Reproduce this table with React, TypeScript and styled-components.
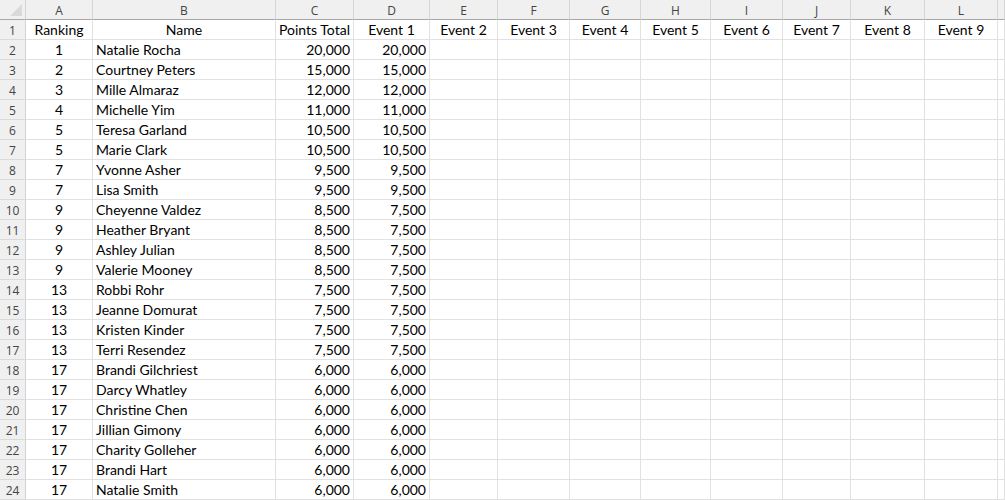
import React from "react";
import styled, { createGlobalStyle } from "styled-components";

const Global = createGlobalStyle`
  html, body { margin: 0; padding: 0; background: #ffffff; }
  body { font-family: "Lato", "Noto Sans", Arial, sans-serif; overflow: hidden; }
`;

const colWidths = [26, 67, 183, 78, 76, 68, 72, 71, 70, 72, 68, 74, 73, 7];
const letters = ["A", "B", "C", "D", "E", "F", "G", "H", "I", "J", "K", "L", ""];

const Sheet = styled.div`
  display: grid;
  grid-template-columns: ${colWidths.map((w) => `${w}px`).join(" ")};
  grid-auto-rows: 20px;
  width: 1005px;
  height: 500px;
  overflow: hidden;
`;

const Corner = styled.div`
  position: relative;
  background: #f0f0f0;
  box-sizing: border-box;
  border-right: 1px solid #d2d2d2;
  border-bottom: 1px solid #a8a8a8;
  &::after {
    content: "";
    position: absolute;
    right: 3px;
    bottom: 3px;
    width: 0;
    height: 0;
    border-left: 12px solid transparent;
    border-bottom: 12px solid #d9d9d9;
  }
`;

const ColHeader = styled.div`
  background: #f0f0f0;
  box-sizing: border-box;
  border-right: 1px solid #d6d6d6;
  border-bottom: 1px solid #a8a8a8;
  color: #444444;
  font-family: "Open Sans", Arial, sans-serif;
  font-size: 12px;
  display: flex;
  align-items: center;
  justify-content: center;
  padding-top: 1px;
`;

const RowHeader = styled.div`
  background: #f0f0f0;
  box-sizing: border-box;
  border-right: 1px solid #d2d2d2;
  border-bottom: 1px solid #dadada;
  color: #444444;
  font-family: "Open Sans", Arial, sans-serif;
  font-size: 12px;
  display: flex;
  align-items: center;
  justify-content: center;
  padding-top: 2px;
`;

const Cell = styled.div<{ $align?: "left" | "center" | "right" }>`
  box-sizing: border-box;
  border-right: 1px solid #e1e1e1;
  border-bottom: 1px solid #e1e1e1;
  color: #000000;
  font-family: "Lato", "Noto Sans", Arial, sans-serif;
  font-size: 14px;
  white-space: nowrap;
  overflow: hidden;
  display: flex;
  align-items: flex-end;
  padding: 0 3px 0 3px;
  line-height: 18px;
  justify-content: ${(p) =>
    p.$align === "right" ? "flex-end" : p.$align === "center" ? "center" : "flex-start"};
`;

const data: [number, string, string, string][] = [
  [1, "Natalie Rocha", "20,000", "20,000"],
  [2, "Courtney Peters", "15,000", "15,000"],
  [3, "Mille Almaraz", "12,000", "12,000"],
  [4, "Michelle Yim", "11,000", "11,000"],
  [5, "Teresa Garland", "10,500", "10,500"],
  [5, "Marie Clark", "10,500", "10,500"],
  [7, "Yvonne Asher", "9,500", "9,500"],
  [7, "Lisa Smith", "9,500", "9,500"],
  [9, "Cheyenne Valdez", "8,500", "7,500"],
  [9, "Heather Bryant", "8,500", "7,500"],
  [9, "Ashley Julian", "8,500", "7,500"],
  [9, "Valerie Mooney", "8,500", "7,500"],
  [13, "Robbi Rohr", "7,500", "7,500"],
  [13, "Jeanne Domurat", "7,500", "7,500"],
  [13, "Kristen Kinder", "7,500", "7,500"],
  [13, "Terri Resendez", "7,500", "7,500"],
  [17, "Brandi Gilchriest", "6,000", "6,000"],
  [17, "Darcy Whatley", "6,000", "6,000"],
  [17, "Christine Chen", "6,000", "6,000"],
  [17, "Jillian Gimony", "6,000", "6,000"],
  [17, "Charity Golleher", "6,000", "6,000"],
  [17, "Brandi Hart", "6,000", "6,000"],
  [17, "Natalie Smith", "6,000", "6,000"],
];

const headers = [
  "Ranking",
  "Name",
  "Points Total",
  "Event 1",
  "Event 2",
  "Event 3",
  "Event 4",
  "Event 5",
  "Event 6",
  "Event 7",
  "Event 8",
  "Event 9",
  "",
];

const emptyCells = (n: number, key: string) =>
  Array.from({ length: n }, (_, i) => <Cell key={`${key}-${i}`} />);

export default function App() {
  return (
    <>
      <Global />
      <Sheet>
        <Corner />
        {letters.map((l, i) => (
          <ColHeader key={`h${i}`}>{l}</ColHeader>
        ))}

        <RowHeader>1</RowHeader>
        {headers.map((h, i) => (
          <Cell key={`t${i}`} $align="center">
            {h}
          </Cell>
        ))}

        {data.map((r, idx) => (
          <React.Fragment key={idx}>
            <RowHeader>{idx + 2}</RowHeader>
            <Cell $align="center">{r[0]}</Cell>
            <Cell $align="left">{r[1]}</Cell>
            <Cell $align="right">{r[2]}</Cell>
            <Cell $align="right">{r[3]}</Cell>
            {emptyCells(9, `e${idx}`)}
          </React.Fragment>
        ))}
      </Sheet>
    </>
  );
}
